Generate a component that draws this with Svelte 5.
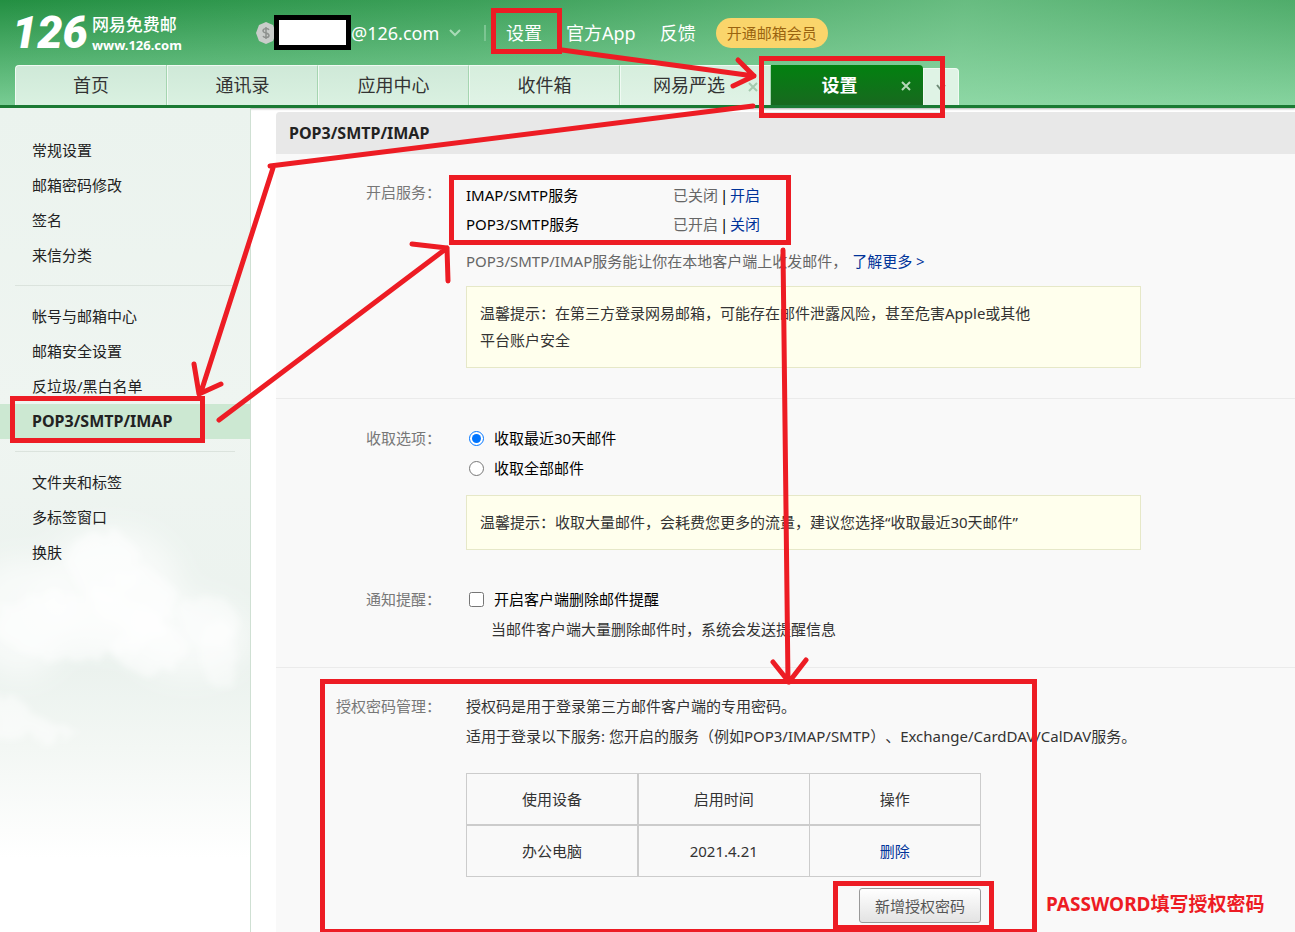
<script>
  const tabs = ['首页', '通讯录', '应用中心', '收件箱', '网易严选'];

  const menuGroups = [
    ['常规设置', '邮箱密码修改', '签名', '来信分类'],
    ['帐号与邮箱中心', '邮箱安全设置', '反垃圾/黑白名单', 'POP3/SMTP/IMAP'],
    ['文件夹和标签', '多标签窗口', '换肤']
  ];
  const activeItem = 'POP3/SMTP/IMAP';

  const services = [
    { name: 'IMAP/SMTP服务', status: '已关闭', action: '开启' },
    { name: 'POP3/SMTP服务', status: '已开启', action: '关闭' }
  ];

  const devices = [{ name: '办公电脑', time: '2021.4.21' }];

  let range = 'recent';
  let notify = false;
</script>

<div class="page">
  <header>
    <div class="topbar">
      <a class="logo" href="#home">
        <span class="logo-num">126</span>
        <span class="logo-text">
          <span class="logo-cn">网易免费邮</span>
          <span class="logo-url">www.126.com</span>
        </span>
      </a>
      <div class="account">
        <svg class="coin" width="20" height="22" viewBox="0 0 20 22">
          <path d="M10 0 L17 3 L20 11 L17 19 L10 22 L3 19 L0 11 L3 3 Z" fill="#c9cdca" />
          <path d="M13 8 C12 6 7 6 7 9 C7 11.500 13 10.500 13 13.500 C13 16 8 16 7 14 M10 5 V17" fill="none" stroke="#8d918e" stroke-width="1.500" />
        </svg>
        <span class="mask"></span>
        <span>@126.com</span>
        <svg class="caret" width="12" height="8" viewBox="0 0 12 8">
          <path d="M1 1 L6 6 L11 1" fill="none" stroke="#a9dbb7" stroke-width="2" />
        </svg>
      </div>
      <span class="divider"></span>
      <nav class="links">
        <a href="#settings">设置</a>
        <a href="#app">官方App</a>
        <a href="#feedback">反馈</a>
      </nav>
      <button class="vip" type="button">开通邮箱会员</button>
    </div>

    <nav class="tabs">
      {#each tabs as tab, i}
        <a class="tab" href="#tab{i}">
          {tab}
          {#if i === 4}
            <svg class="close" width="10" height="10" viewBox="0 0 10 10">
              <path d="M1 1 L9 9 M9 1 L1 9" stroke="#a5c9ae" stroke-width="2" />
            </svg>
          {/if}
        </a>
      {/each}
      <a class="tab active" href="#settings">
        设置
        <svg class="close" width="10" height="10" viewBox="0 0 10 10">
          <path d="M1 1 L9 9 M9 1 L1 9" stroke="#b5d8b8" stroke-width="2" />
        </svg>
      </a>
      <button class="more" type="button" aria-label="更多">
        <svg width="10" height="8" viewBox="0 0 10 8">
          <path d="M1 1 L5 6 L9 1" fill="none" stroke="#6f8a76" stroke-width="2" />
        </svg>
      </button>
    </nav>
  </header>

  <div class="body">
    <aside>
      <svg class="clouds" width="250" height="320" viewBox="0 0 250 320" aria-hidden="true">
        <defs>
          <filter id="haze" x="-30%" y="-30%" width="160%" height="160%">
            <feGaussianBlur stdDeviation="14" />
          </filter>
          <filter id="puff" x="-20%" y="-20%" width="140%" height="140%">
            <feTurbulence type="fractalNoise" baseFrequency="0.05" numOctaves="3" seed="4" result="noise" />
            <feDisplacementMap in="SourceGraphic" in2="noise" scale="26" />
            <feGaussianBlur stdDeviation="3" />
          </filter>
        </defs>
        <g fill="#fff" filter="url(#haze)">
          <ellipse cx="110" cy="90" rx="70" ry="60" opacity=".6" />
          <ellipse cx="20" cy="120" rx="50" ry="60" opacity=".6" />
          <ellipse cx="190" cy="140" rx="60" ry="40" opacity=".6" />
        </g>
        <g fill="#fff" filter="url(#puff)">
          <ellipse cx="105" cy="68" rx="36" ry="34" opacity=".5" />
          <ellipse cx="134" cy="102" rx="42" ry="30" opacity=".5" />
          <ellipse cx="80" cy="128" rx="84" ry="34" opacity=".5" />
          <ellipse cx="150" cy="150" rx="36" ry="26" opacity=".5" />
          <ellipse cx="209" cy="124" rx="28" ry="26" opacity=".4" />
          <ellipse cx="219" cy="156" rx="18" ry="34" opacity=".4" />
          <path d="M-10 198 L20 200 L30 216 L80 232 L40 242 L-10 240 Z" opacity=".5" />
        </g>
      </svg>
      {#each menuGroups as group}
        <ul>
          {#each group as item}
            <li class:current={item === activeItem}><a href="#menu">{item}</a></li>
          {/each}
        </ul>
      {/each}
    </aside>

    <main>
      <h1>POP3/SMTP/IMAP</h1>

      <section class="service">
        <h2>开启服务：</h2>
        <div class="content">
          {#each services as s}
            <div class="service-row">
              <span class="service-name">{s.name}</span>
              <span class="muted">{s.status}</span>
              <span class="bar">|</span>
              <a href="#toggle">{s.action}</a>
            </div>
          {/each}
          <p class="intro muted">POP3/SMTP/IMAP服务能让你在本地客户端上收发邮件，<a href="#more">了解更多 &gt;</a></p>
          <div class="tip"><p>温馨提示：在第三方登录网易邮箱，可能存在邮件泄露风险，甚至危害Apple或其他平台账户安全</p></div>
        </div>
      </section>

      <section class="receive">
        <h2>收取选项：</h2>
        <div class="content">
          <label class="option"><input type="radio" value="recent" bind:group={range} />收取最近30天邮件</label>
          <label class="option"><input type="radio" value="all" bind:group={range} />收取全部邮件</label>
          <div class="tip"><p>温馨提示：收取大量邮件，会耗费您更多的流量，建议您选择“收取最近30天邮件”</p></div>
        </div>
      </section>

      <section class="notice">
        <h2>通知提醒：</h2>
        <div class="content">
          <label class="option"><input type="checkbox" bind:checked={notify} />开启客户端删除邮件提醒</label>
          <p class="sub">当邮件客户端大量删除邮件时，系统会发送提醒信息</p>
        </div>
      </section>

      <section class="auth">
        <h2>授权密码管理：</h2>
        <div class="content">
          <p>授权码是用于登录第三方邮件客户端的专用密码。</p>
          <p>适用于登录以下服务: 您开启的服务（例如POP3/IMAP/SMTP）、Exchange/CardDAV/CalDAV服务。</p>
          <table>
            <thead>
              <tr><th>使用设备</th><th>启用时间</th><th>操作</th></tr>
            </thead>
            <tbody>
              {#each devices as d}
                <tr><td>{d.name}</td><td>{d.time}</td><td><a href="#delete">删除</a></td></tr>
              {/each}
            </tbody>
          </table>
          <div class="actions"><button class="add" type="button">新增授权密码</button></div>
        </div>
      </section>
    </main>
  </div>

  <!-- hand-drawn walkthrough marks over the page -->
  <svg class="marks" width="1295" height="932" viewBox="0 0 1295 932" aria-hidden="true">
    <g fill="none" stroke="#ed1c24" stroke-width="5">
      <rect x="493.500" y="10.500" width="66" height="41" />
      <rect x="761.500" y="58.500" width="181" height="57" />
      <rect x="12.500" y="398.500" width="190" height="42" />
      <rect x="451.500" y="177.500" width="337" height="65" />
      <rect x="322.500" y="681.500" width="712" height="250" />
      <rect x="835.500" y="883.500" width="156" height="44" />
      <g stroke-linecap="round" stroke-linejoin="round">
        <path d="M562 50 L754 76 M738 60 L754 76 L733 86" />
        <path d="M753 106 L270 166 M273 168 L201 392 M194 364 L199 394 L221 384" />
        <path d="M219 420 L447 248 M412 244 L447 248 L448 281" />
        <path d="M783 250 L788 682 M773 662 L789 682 L806 660" />
      </g>
    </g>
  </svg>
  <p class="note">PASSWORD填写授权密码</p>
</div>

<style>
  :global(body) {
    overflow: hidden;
    background: #fff;
  }

  .page {
    position: relative;
    height: 100vh;
    overflow: hidden;
    display: flex;
    flex-direction: column;
    font-family: "Noto Sans", "Noto Sans CJK SC", sans-serif;
    font-size: 15px;
    line-height: 30px;
    text-spacing-trim: space-all;
    color: #333;
  }

  .page * {
    box-sizing: border-box;
  }

  a {
    color: #003399;
    text-decoration: none;
  }

  p, h1, h2, ul {
    margin: 0;
    padding: 0;
  }

  button {
    font-family: inherit;
    cursor: pointer;
  }

  header {
    position: relative;
    background:
      linear-gradient(95deg, rgba(160, 225, 180, 0) 0%, rgba(160, 225, 180, 0.2) 36%, rgba(160, 225, 180, 0.55) 74%, rgba(160, 225, 180, 0.35) 100%),
      linear-gradient(#238f42, #78cc93);
    border-bottom: 3px solid #1a7a33;
    box-shadow: 0 1px 2px rgba(0, 0, 0, 0.3);
  }

  .topbar {
    display: flex;
    align-items: center;
    height: 65px;
    padding-left: 12px;
  }

  .logo {
    display: flex;
    align-items: center;
    gap: 4px;
    width: 244px;
    color: #fff;
  }

  .logo-num {
    font: italic 900 45px/45px Roboto, sans-serif;
  }

  .logo-text {
    display: flex;
    flex-direction: column;
    padding-top: 4px;
  }

  .logo-cn {
    font-size: 17px;
    font-weight: 500;
    line-height: 20px;
  }

  .logo-url {
    font-size: 13px;
    font-weight: 700;
    line-height: 20px;
  }

  .account {
    display: flex;
    align-items: center;
    width: 228px;
    font-size: 18px;
    color: #fff;
  }

  .mask {
    width: 77px;
    height: 35px;
    background: #fff;
    border: 5px solid #000;
    margin-left: -2px;
  }

  .caret {
    margin-left: 10px;
  }

  .divider {
    width: 2px;
    height: 16px;
    background: #7cc592;
  }

  .links {
    display: flex;
    gap: 24px;
    padding-left: 20px;
    font-size: 18px;
  }

  .links a {
    color: #fff;
  }

  .vip {
    height: 30px;
    margin-left: 20px;
    padding: 0 11px;
    border: 0;
    border-radius: 15px;
    background: #fad56b;
    color: #9a6410;
    font-size: 15px;
  }

  .tabs {
    display: flex;
    align-items: flex-end;
    height: 40px;
    padding-left: 15px;
  }

  .tab {
    position: relative;
    width: 151px;
    height: 40px;
    border: 1px solid #f0faf3;
    border-right-color: #a5d5b0;
    border-bottom: 0;
    background: linear-gradient(#cfe9d8, #daf1e1);
    color: #333;
    font-size: 18px;
    line-height: 38px;
    text-align: center;
  }

  .tab:first-child {
    width: 152px;
    border-top-left-radius: 4px;
  }

  .tab:nth-child(n + 4) {
    background: linear-gradient(#d6eedd, #e0f3e6);
  }

  .tab:nth-child(5) {
    padding-right: 13px;
  }

  .close {
    position: absolute;
    right: 12px;
    top: 16px;
  }

  .tab.active {
    width: 152px;
    padding-right: 15px;
    border: 0;
    border-radius: 0 4px 0 0;
    background: linear-gradient(#028110, #18691f);
    color: #fff;
    font-weight: 700;
    line-height: 40px;
  }

  .more {
    width: 36px;
    height: 37px;
    padding: 0;
    border: 1px solid #f0faf3;
    border-bottom: 0;
    border-radius: 0 4px 0 0;
    background: #dff3e5;
  }

  .body {
    flex: 1;
    display: flex;
    min-height: 0;
  }

  aside {
    position: relative;
    flex: none;
    width: 251px;
    padding-top: 25px;
    border-right: 1px solid #cfe0d3;
    background: linear-gradient(#ebf3ee 0, #eff5f1 300px, #ebf2ee 560px, #f3f7f4 640px, #fff 750px);
  }

  .clouds {
    position: absolute;
    left: 0;
    top: 390px;
  }

  ul {
    position: relative;
    list-style: none;
  }

  ul + ul::before {
    content: '';
    display: block;
    height: 1px;
    margin: 12px 15px 13px;
    background: #dbe3dd;
  }

  li {
    height: 35px;
    padding-left: 32px;
    line-height: 35px;
  }

  li a {
    color: #222;
  }

  li.current {
    background: #cce8d2;
    font-size: 16px;
    font-weight: 700;
  }

  main {
    flex: 1;
    margin: 4px 0 0 25px;
    background: #f9f9f9;
    border-top-left-radius: 4px;
  }

  h1 {
    height: 42px;
    padding-left: 13px;
    border-top-left-radius: 4px;
    background: #e8e8e8;
    color: #222;
    font-size: 16px;
    line-height: 42px;
  }

  section {
    display: flex;
    gap: 25px;
  }

  h2 {
    flex: none;
    width: 165px;
    color: #777;
    font-size: 15px;
    font-weight: 400;
    line-height: 30px;
    text-align: right;
  }

  .content {
    flex: 1;
  }

  .muted {
    color: #666;
  }

  .service {
    padding: 23px 0 30px;
    border-bottom: 1px solid #ebebeb;
  }

  .service .content {
    padding-top: 3px;
  }

  .service-row {
    display: flex;
    height: 29px;
    color: #000;
  }

  .service-name {
    width: 207px;
  }

  .bar {
    width: 12px;
    text-align: center;
  }

  .intro {
    margin: 8px 0 10px;
  }

  .intro a {
    margin-left: 5px;
  }

  .tip {
    width: 675px;
    padding: 13px;
    border: 1px solid #e6e8c8;
    background: #ffffed;
    line-height: 27px;
  }

  .tip p {
    max-width: 560px;
  }

  .receive {
    padding-top: 24px;
  }

  .option {
    display: flex;
    align-items: center;
    height: 30px;
    color: #000;
  }

  .option input {
    width: 15px;
    height: 15px;
    margin: 0 10px 0 3px;
  }

  .receive .tip {
    margin-top: 12px;
  }

  .notice {
    padding: 34px 0 23px;
    border-bottom: 1px solid #ebebeb;
  }

  .sub {
    padding-left: 25px;
  }

  .auth {
    padding-top: 23px;
  }

  table {
    width: 515px;
    margin-top: 22px;
    border-collapse: collapse;
    table-layout: fixed;
  }

  th, td {
    height: 52px;
    padding: 0;
    border: 1px solid #ccc;
    font-weight: 400;
    text-align: center;
  }

  th {
    height: 51px;
    border-bottom-width: 2px;
  }

  th:first-child, td:first-child {
    border-right-width: 2px;
  }

  .actions {
    width: 515px;
    padding-top: 11px;
    text-align: right;
  }

  .add {
    height: 35px;
    padding: 0 15px;
    border: 1px solid #999;
    border-radius: 3px;
    background: linear-gradient(#fff, #e3e3e3);
    color: #555;
    font-size: 15px;
  }

  .marks {
    position: absolute;
    left: 0;
    top: 0;
    pointer-events: none;
  }

  .note {
    position: absolute;
    left: 1046px;
    top: 889px;
    color: #ed1c24;
    font-size: 19px;
    font-weight: 700;
    white-space: nowrap;
  }
</style>
